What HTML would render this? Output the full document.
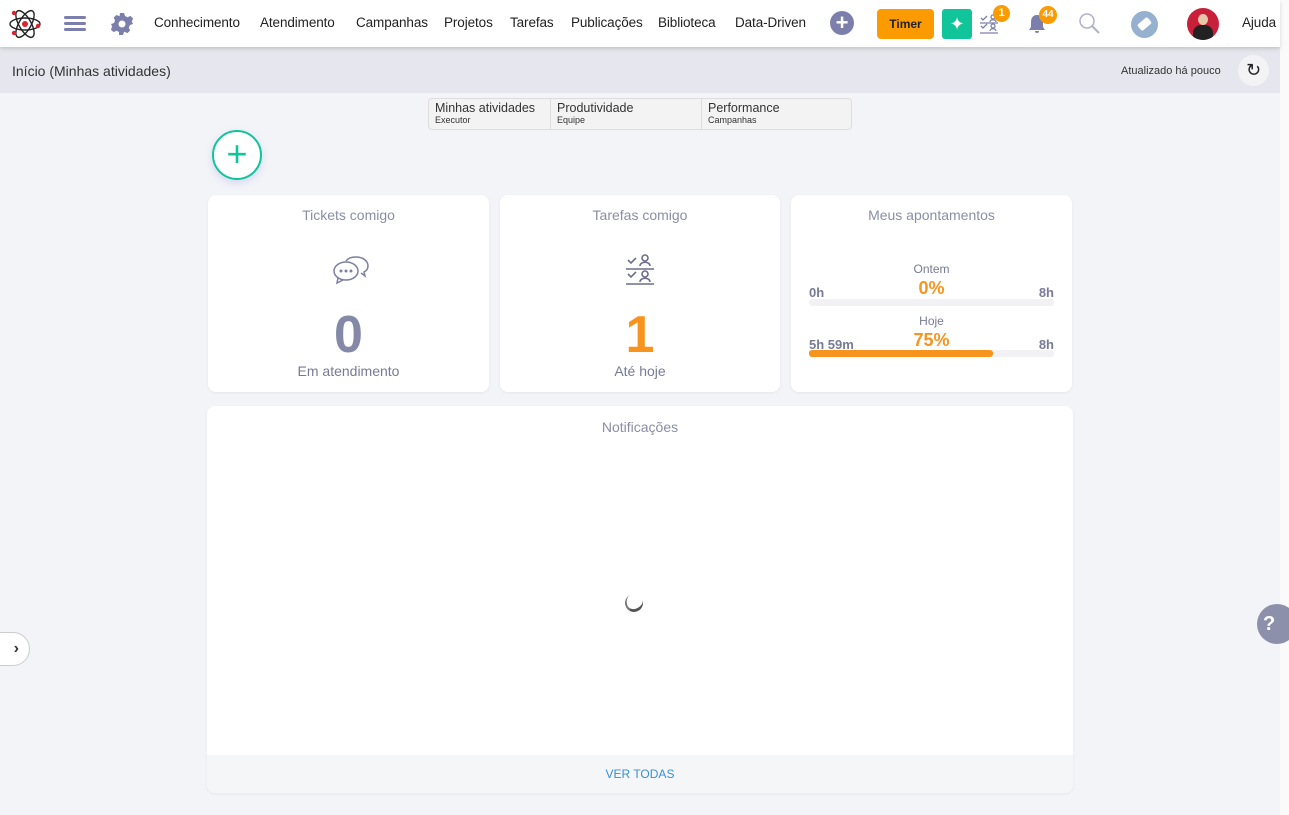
<!DOCTYPE html><html><head><meta charset="utf-8"><style>
*{box-sizing:border-box;margin:0;padding:0}
body{width:1289px;height:815px;overflow:hidden;background:#f3f4f8;font-family:"Liberation Sans","DejaVu Sans",sans-serif;position:relative;color:#333}
.nav{position:absolute;left:0;top:0;width:1280px;height:47px;background:#fff;box-shadow:0 2px 4px rgba(0,0,0,.15);z-index:2}
.nav .m{position:absolute;top:15px;font-size:13.5px;color:#222;letter-spacing:-0.1px}
.sub{position:absolute;left:0;top:47px;width:1280px;height:46px;background:#e6e7ee}
.sb{position:absolute;right:0;top:0;width:9px;height:815px;background:#fafafa}
.card{position:absolute;background:#fff;border-radius:8px;box-shadow:0 1px 3px rgba(0,0,0,.06)}
.t{position:absolute;width:100%;text-align:center;color:#8a8ea6;font-size:14px}
</style></head><body>
<div class="sb"></div>
<div class="nav">
<svg style="position:absolute;left:8px;top:7px" width="34" height="34" viewBox="0 0 34 34"><g fill="none" stroke="#222" stroke-width="1.4"><ellipse cx="17" cy="17" rx="15" ry="6"/><ellipse cx="17" cy="17" rx="15" ry="6" transform="rotate(60 17 17)"/><ellipse cx="17" cy="17" rx="15" ry="6" transform="rotate(-60 17 17)"/></g><circle cx="17" cy="17" r="3" fill="#e02030"/><circle cx="6" cy="6" r="2.2" fill="#e02030"/><circle cx="30" cy="19" r="2.2" fill="#e02030"/><circle cx="6" cy="26" r="2.2" fill="#e02030"/></svg>
<div style="position:absolute;left:64px;top:16px;width:22px;height:3px;background:#7c7fac;box-shadow:0 6px 0 #7c7fac,0 12px 0 #7c7fac;border-radius:2px"></div>
<svg style="position:absolute;left:110px;top:12px" width="24" height="24" viewBox="0 0 24 24"><path fill="#7c7fac" d="M10 1h4l1 3 2.5 1.2 3-1.3 2.6 2.6-1.3 3L23 12l-3 1-1.2 2.5 1.3 3-2.6 2.6-3-1.3L14 20l-1 3h-4l0-3-2.5-1.2-3 1.3L.9 17.5l1.3-3L1 12l3-1 1-2.5-1.3-3L6.5 3l3 1.3z"/><circle cx="12" cy="12" r="3.5" fill="#fff"/></svg>
<span class="m" style="left:154px">Conhecimento</span><span class="m" style="left:260px">Atendimento</span><span class="m" style="left:356px">Campanhas</span><span class="m" style="left:444px">Projetos</span><span class="m" style="left:510px">Tarefas</span><span class="m" style="left:571px">Publicações</span><span class="m" style="left:658px">Biblioteca</span><span class="m" style="left:735px">Data-Driven</span>
<div style="position:absolute;left:830px;top:11px;width:24px;height:24px;border-radius:50%;background:#7c7fac;color:#fff;font-size:22px;line-height:23px;text-align:center;font-weight:bold">+</div>
<div style="position:absolute;left:877px;top:9px;width:57px;height:30px;border-radius:4px;background:#fb9b00;font-size:12px;font-weight:bold;text-align:center;line-height:30px;color:#222">Timer</div>
<div style="position:absolute;left:942px;top:9px;width:30px;height:30px;border-radius:3px;background:#12c49a;color:#fff;font-size:18px;text-align:center;line-height:30px">✦</div>
<svg style="position:absolute;left:979px;top:13px" width="20" height="22" viewBox="0 0 20 22"><g fill="none" stroke="#7c7fac" stroke-width="1.3"><path d="M2 5l2 2 4-4M2 13l2 2 4-4M1 10h18M1 20h18"/><circle cx="14" cy="4" r="2"/><path d="M11 9c0-3 6-3 6 0"/><circle cx="14" cy="13" r="2"/><path d="M11 18c0-3 6-3 6 0"/></g></svg>
<div style="position:absolute;left:993px;top:5px;width:17px;height:17px;border-radius:50%;background:#fb9b00;color:#fff;font-size:11px;font-weight:bold;text-align:center;line-height:17px">1</div>
<svg style="position:absolute;left:1026px;top:13px" width="22" height="22" viewBox="0 0 22 22"><path fill="#7c7fac" d="M11 2c4 0 6 3 6 7v5l2 3H3l2-3V9c0-4 2-7 6-7zM9 18h4a2 2 0 0 1-4 0z"/></svg>
<div style="position:absolute;left:1039px;top:6px;width:18px;height:18px;border-radius:50%;background:#fb9b00;color:#fff;font-size:10px;font-weight:bold;text-align:center;line-height:18px">44</div>
<svg style="position:absolute;left:1078px;top:12px" width="24" height="24" viewBox="0 0 24 24"><circle cx="9" cy="9" r="7" fill="none" stroke="#b0b2cc" stroke-width="1.5"/><path d="M14 14l7 7" stroke="#b0b2cc" stroke-width="2"/></svg>
<div style="position:absolute;left:1131px;top:11px;width:27px;height:27px;border-radius:50%;background:#96b0cf"><div style="position:absolute;left:7px;top:9px;width:13px;height:8px;background:#fff;border-radius:2px;transform:rotate(-40deg)"></div></div>
<div style="position:absolute;left:1187px;top:8px;width:32px;height:32px;border-radius:50%;background:#c8203a;overflow:hidden"><div style="position:absolute;left:11px;top:6px;width:10px;height:11px;border-radius:50%;background:#e6c7a8"></div><div style="position:absolute;left:6px;top:17px;width:20px;height:16px;border-radius:8px 8px 0 0;background:#222"></div></div>
<span class="m" style="left:1242px">Ajuda</span>
</div>
<div class="sub"><span style="position:absolute;left:12px;top:16px;font-size:14px;color:#333">Início (Minhas atividades)</span><span style="position:absolute;left:1121px;top:18px;font-size:11px;color:#333">Atualizado há pouco</span><div style="position:absolute;left:1238px;top:8px;width:31px;height:31px;border-radius:50%;background:#f3f3f5;text-align:center;line-height:31px;font-size:18px;color:#222">↻</div></div>
<div style="position:absolute;left:428px;top:98px;width:424px;height:32px;border:1px solid #ddd;border-radius:4px;background:#f3f3f3;display:flex;font-size:12.5px">
<div style="width:122px;padding:2px 6px;border-right:1px solid #ddd">Minhas atividades<div style="font-size:9px">Executor</div></div>
<div style="width:151px;padding:2px 6px;border-right:1px solid #ddd">Produtividade<div style="font-size:9px">Equipe</div></div>
<div style="padding:2px 6px">Performance<div style="font-size:9px">Campanhas</div></div></div>
<div style="position:absolute;left:212px;top:130px;width:50px;height:50px;border-radius:50%;border:2px solid #12c49a;background:#fff;box-shadow:0 3px 8px rgba(100,100,220,.2);color:#12c49a;font-size:36px;text-align:center;line-height:44px">+</div>
<div class="card" style="left:208px;top:195px;width:281px;height:197px"><div class="t" style="top:12px">Tickets comigo</div>
<svg style="position:absolute;left:124px;top:60px" width="38" height="32" viewBox="0 0 38 32"><g fill="none" stroke="#7c7fa0" stroke-width="1.5"><path d="M14 6c2-3 6-4 10-4 7 0 12 4 12 9 0 3-2 5-4 6l1 4-4-3"/><ellipse cx="14" cy="16" rx="12" ry="9"/><path d="M6 23l-1 5 6-3"/></g><g fill="#7c7fa0"><circle cx="9" cy="16" r="1.5"/><circle cx="14" cy="16" r="1.5"/><circle cx="19" cy="16" r="1.5"/></g></svg>
<div class="t" style="top:110px;font-size:52px;font-weight:bold;color:#8489a8">0</div><div class="t" style="top:168px;color:#777a96">Em atendimento</div></div>
<div class="card" style="left:500px;top:195px;width:280px;height:197px"><div class="t" style="top:12px">Tarefas comigo</div>
<svg style="position:absolute;left:125px;top:58px" width="30" height="34" viewBox="0 0 30 34"><g fill="none" stroke="#6c6f8e" stroke-width="1.6"><path d="M3 7l3 3 5-5M3 21l3 3 5-5M1 16h28M1 31h28"/><circle cx="20" cy="5" r="3"/><path d="M15 13c0-5 10-5 10 0"/><circle cx="20" cy="21" r="3"/><path d="M15 29c0-5 10-5 10 0"/></g></svg>
<div class="t" style="top:110px;font-size:52px;font-weight:bold;color:#f7941d">1</div><div class="t" style="top:168px;color:#777a96">Até hoje</div></div>
<div class="card" style="left:791px;top:195px;width:281px;height:197px"><div class="t" style="top:12px">Meus apontamentos</div>
<div class="t" style="top:67px;font-size:12px;color:#777a96">Ontem</div>
<div class="t" style="top:83px;font-size:18px;font-weight:bold;color:#f7941d">0%</div>
<span style="position:absolute;left:18px;top:90px;font-size:13px;font-weight:bold;color:#777a96">0h</span><span style="position:absolute;right:18px;top:90px;font-size:13px;font-weight:bold;color:#777a96">8h</span>
<div style="position:absolute;left:18px;top:104px;width:245px;height:7px;background:#f2f2f4;border-radius:3px"></div>
<div class="t" style="top:119px;font-size:12px;color:#777a96">Hoje</div>
<div class="t" style="top:135px;font-size:18px;font-weight:bold;color:#f7941d">75%</div>
<span style="position:absolute;left:18px;top:142px;font-size:13px;font-weight:bold;color:#777a96">5h 59m</span><span style="position:absolute;right:18px;top:142px;font-size:13px;font-weight:bold;color:#777a96">8h</span>
<div style="position:absolute;left:18px;top:155px;width:245px;height:7px;background:#f2f2f4;border-radius:3px"><div style="width:184px;height:7px;background:#f7941d;border-radius:3px"></div></div></div>
<div class="card" style="left:207px;top:406px;width:866px;height:387px;overflow:hidden"><div class="t" style="top:13px">Notificações</div>
<div style="position:absolute;left:418px;top:188px;width:18px;height:18px;border-radius:50%;border-bottom:3px solid #555;border-left:2px solid #777;transform:rotate(-20deg)"></div>
<div style="position:absolute;left:0;bottom:0;width:100%;height:38px;background:#f5f6f8;text-align:center;line-height:38px;font-size:12px;color:#3a8fd8">VER TODAS</div></div>
<div style="position:absolute;left:-20px;top:632px;width:50px;height:34px;border-radius:17px;background:#fff;border:1px solid #ccc;text-align:right;padding-right:10px;line-height:32px;font-size:16px;font-weight:bold">›</div>
<div style="position:absolute;left:1257px;top:604px;width:40px;height:40px;border-radius:50%;background:#8c90aa;color:#fff;font-weight:bold;font-size:20px;line-height:40px;padding-left:6px">?</div>
</body></html>
